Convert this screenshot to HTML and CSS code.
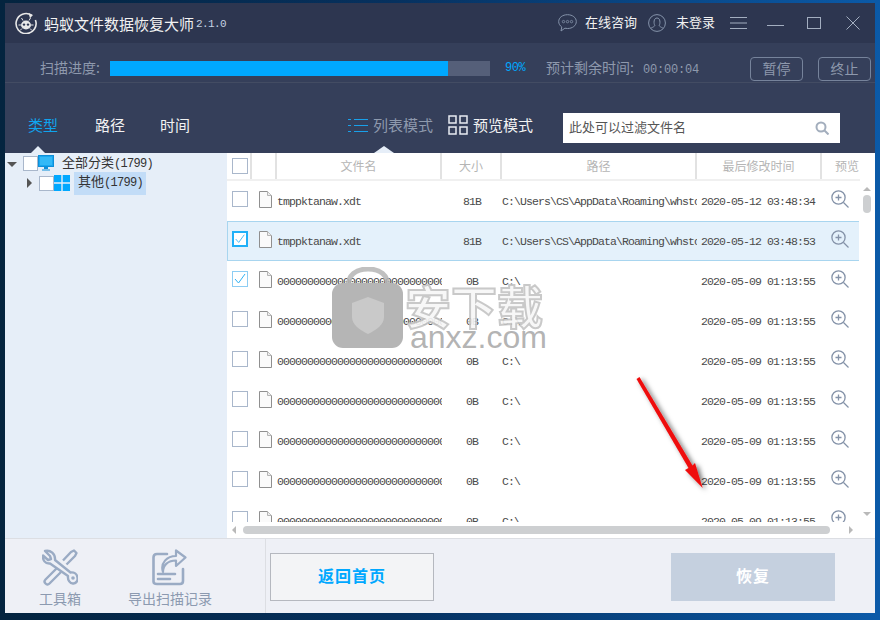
FILE: index.html
```html
<!DOCTYPE html>
<html lang="zh-CN">
<head>
    <meta charset="UTF-8">
    <title>蚂蚁文件数据恢复大师</title>
    <link rel="stylesheet" href="styles.css">
</head>
<body>
    <svg class="defs" width="0" height="0">
        <symbol id="doc" viewBox="0 0 13 17">
            <path d="M.5.5h8l4 4v12H.5z" fill="#fafafa" stroke="#8f8f8f"/>
            <path d="M8.5.5v4h4" fill="#eee" stroke="#b5b5b5"/>
        </symbol>
        <symbol id="zoom" viewBox="0 0 18 18">
            <circle cx="7.5" cy="7.5" r="6.6" fill="none" stroke="#8492a8" stroke-width="1.3"/>
            <path d="M12.5 12.5l5 5" stroke="#8492a8" stroke-width="1.3"/>
            <path d="M4.5 7.5h6M7.5 4.5v6" stroke="#8492a8" stroke-width="1.3"/>
        </symbol>
    </svg>

    <div class="window">
        <header class="titlebar">
            <svg class="logo" width="22" height="22" viewBox="0 0 22 22">
                <path d="M16.5 3.2A10 10 0 1 0 20.4 8" fill="none" stroke="#e8e8e8" stroke-width="1.6"/>
                <path d="M13.5 1l4.5 2-3 3.2z" fill="#e8e8e8"/>
                <ellipse cx="11" cy="13" rx="5" ry="4.4" fill="#e8e8e8"/>
                <circle cx="9" cy="12.6" r="1.2" fill="#2d3650"/>
                <circle cx="13" cy="12.6" r="1.2" fill="#2d3650"/>
                <path d="M8 8.5L6.5 6M14 8.5L15.5 6M6 13H3.5M16 13h2.500M7 16.500L5 18.500M15 16.500l2 2" stroke="#e8e8e8"/>
            </svg>
            <div class="app-name">蚂蚁文件数据恢复大师</div>
            <div class="version">2.1.0</div>

            <div class="title-right">
                <svg width="19" height="18" viewBox="0 0 19 18">
                    <path d="M9.500.700c5 0 8.800 2.900 8.800 6.900s-3.800 6.900-8.800 6.900c-.9 0-1.800-.1-2.600-.3L3 17l.8-4C1.900 11.700.7 9.800.700 7.600.700 3.600 4.500.700 9.500.700z" fill="none" stroke="#8593aa"/>
                    <circle cx="5.500" cy="7.600" r="1.200" fill="none" stroke="#8593aa" stroke-width=".8"/>
                    <circle cx="9.500" cy="7.600" r="1.200" fill="none" stroke="#8593aa" stroke-width=".8"/>
                    <circle cx="13.500" cy="7.600" r="1.200" fill="none" stroke="#8593aa" stroke-width=".8"/>
                </svg>
                <span class="title-link chat">在线咨询</span>
                <svg class="user-icon" width="18" height="18" viewBox="0 0 18 18">
                    <circle cx="9" cy="9" r="8.400" fill="none" stroke="#8593aa"/>
                    <path d="M6.800 11.500C5.600 9.500 5.500 4 9 4s3.400 5.500 2.200 7.500c.2 1 2 1.700 3.600 2.500M6.800 11.500c-.2 1-2 1.700-3.600 2.500" fill="none" stroke="#8593aa"/>
                </svg>
                <span class="title-link login">未登录</span>
                <svg class="ctl-menu" width="17" height="12" viewBox="0 0 17 12">
                    <path d="M0 .5h17M0 6h17M0 11.500h17" stroke="#a3aec0"/>
                </svg>
                <svg class="ctl-min" width="17" height="12" viewBox="0 0 17 12">
                    <path d="M0 8.500h17" stroke="#a3aec0"/>
                </svg>
                <svg class="ctl-max" width="14" height="12" viewBox="0 0 14 12">
                    <rect x=".5" y=".5" width="13" height="11" fill="none" stroke="#a3aec0"/>
                </svg>
                <svg class="ctl-close" width="14" height="14" viewBox="0 0 14 14">
                    <path d="M.5.5l13 13M13.500.5l-13 13" stroke="#a3aec0"/>
                </svg>
            </div>
        </header>

        <section class="progress-row">
            <span class="progress-label">扫描进度:</span>
            <div class="progress-track"><div class="progress-fill" style="width: 89%"></div></div>
            <span class="progress-pct">90%</span>
            <span class="progress-eta">预计剩余时间:<span class="eta-num">00:00:04</span></span>
            <div class="progress-btns">
                <button class="ghost-btn">暂停</button>
                <button class="ghost-btn">终止</button>
            </div>
        </section>

        <nav class="tabs-row">
            <span class="tab active">类型</span>
            <span class="tab">路径</span>
            <span class="tab">时间</span>

            <div class="mode-group">
                <span class="mode list-mode">
                    <svg width="20" height="13" viewBox="0 0 20 13">
                        <path d="M0 .5h3M6 .5h14M0 6.500h3M6 6.500h14M0 12.500h3M6 12.500h14" stroke="#19a0ea"/>
                    </svg>
                    列表模式
                </span>
                <span class="mode grid-mode">
                    <svg width="20" height="20" viewBox="0 0 20 20">
                        <path d="M1 1h7v7H1zM12 1h7v7h-7zM1 12h7v7H1zM12 12h7v7h-7z" fill="none" stroke="#e8ecf2" stroke-width="1.500"/>
                    </svg>
                    预览模式
                </span>
            </div>

            <div class="search">
                <span class="search-hint">此处可以过滤文件名</span>
                <svg width="14" height="14" viewBox="0 0 14 14">
                    <circle cx="6" cy="6" r="4.500" fill="none" stroke="#a3aebd" stroke-width="2"/>
                    <path d="M9.500 9.500l4 4" stroke="#a3aebd" stroke-width="2"/>
                </svg>
            </div>
        </nav>

        <main class="content">
            <aside class="tree">
                <div class="tree-row root">
                    <span class="arrow-open"></span>
                    <span class="check"></span>
                    <svg class="tree-icon" width="16" height="16" viewBox="0 0 16 16">
                        <rect x=".5" y=".5" width="15" height="11" fill="#1aa7f0" stroke="#0d8fd8"/>
                        <path d="M2 2h12v8H2z" fill="#33b9f7"/>
                        <path d="M6 12h4v2H6zM4 14.500h8v1H4z" fill="#0d8fd8"/>
                    </svg>
                    <span class="tree-label">全部分类<span class="count">(1799)</span></span>
                </div>
                <div class="tree-row child">
                    <span class="arrow-closed"></span>
                    <span class="check"></span>
                    <svg class="tree-icon" width="16" height="16" viewBox="0 0 16 16">
                        <path d="M0 0h7.300v7.300H0zM8.700 0H16v7.300H8.700zM0 8.700h7.300V16H0zM8.700 8.700H16V16H8.700z" fill="#00a8ff"/>
                    </svg>
                    <span class="tree-label picked">其他<span class="count">(1799)</span></span>
                </div>
            </aside>

            <section class="list">
                <div class="grid-row head">
                    <span class="cell"><span class="check"></span></span>
                    <span class="cell"></span>
                    <span class="cell">文件名</span>
                    <span class="cell">大小</span>
                    <span class="cell">路径</span>
                    <span class="cell">最后修改时间</span>
                    <span class="cell last">预览</span>
                </div>

                <div class="rows">
                    <div class="grid-row item">
                        <span class="check"></span>
                        <svg class="doc" width="13" height="17"><use href="#doc"/></svg>
                        <span class="name">tmppktanaw.xdt</span>
                        <span class="size">81B</span>
                        <span class="path">C:\Users\CS\AppData\Roaming\whstc</span>
                        <span class="time">2020-05-12 03:48:34</span>
                        <svg class="zoom" width="18" height="18"><use href="#zoom"/></svg>
                    </div>
                    <div class="grid-row item selected">
                        <span class="check on strong">
                            <svg width="14" height="14" viewBox="0 0 14 14"><path d="M2 7l3.500 4L12 2" fill="none" stroke="#2fb2f5"/></svg>
                        </span>
                        <svg class="doc" width="13" height="17"><use href="#doc"/></svg>
                        <span class="name">tmppktanaw.xdt</span>
                        <span class="size">81B</span>
                        <span class="path">C:\Users\CS\AppData\Roaming\whstc</span>
                        <span class="time">2020-05-12 03:48:53</span>
                        <svg class="zoom" width="18" height="18"><use href="#zoom"/></svg>
                    </div>
                    <div class="grid-row item">
                        <span class="check on">
                            <svg width="14" height="14" viewBox="0 0 14 14"><path d="M2 7l3.500 4L12 2" fill="none" stroke="#2fb2f5"/></svg>
                        </span>
                        <svg class="doc" width="13" height="17"><use href="#doc"/></svg>
                        <span class="name">000000000000000000000000000000000</span>
                        <span class="size">0B</span>
                        <span class="path">C:\</span>
                        <span class="time">2020-05-09 01:13:55</span>
                        <svg class="zoom" width="18" height="18"><use href="#zoom"/></svg>
                    </div>
                    <div class="grid-row item">
                        <span class="check"></span>
                        <svg class="doc" width="13" height="17"><use href="#doc"/></svg>
                        <span class="name">000000000000000000000000000000000</span>
                        <span class="size">0B</span>
                        <span class="path">C:\</span>
                        <span class="time">2020-05-09 01:13:55</span>
                        <svg class="zoom" width="18" height="18"><use href="#zoom"/></svg>
                    </div>
                    <div class="grid-row item">
                        <span class="check"></span>
                        <svg class="doc" width="13" height="17"><use href="#doc"/></svg>
                        <span class="name">000000000000000000000000000000000</span>
                        <span class="size">0B</span>
                        <span class="path">C:\</span>
                        <span class="time">2020-05-09 01:13:55</span>
                        <svg class="zoom" width="18" height="18"><use href="#zoom"/></svg>
                    </div>
                    <div class="grid-row item">
                        <span class="check"></span>
                        <svg class="doc" width="13" height="17"><use href="#doc"/></svg>
                        <span class="name">000000000000000000000000000000000</span>
                        <span class="size">0B</span>
                        <span class="path">C:\</span>
                        <span class="time">2020-05-09 01:13:55</span>
                        <svg class="zoom" width="18" height="18"><use href="#zoom"/></svg>
                    </div>
                    <div class="grid-row item">
                        <span class="check"></span>
                        <svg class="doc" width="13" height="17"><use href="#doc"/></svg>
                        <span class="name">000000000000000000000000000000000</span>
                        <span class="size">0B</span>
                        <span class="path">C:\</span>
                        <span class="time">2020-05-09 01:13:55</span>
                        <svg class="zoom" width="18" height="18"><use href="#zoom"/></svg>
                    </div>
                    <div class="grid-row item">
                        <span class="check"></span>
                        <svg class="doc" width="13" height="17"><use href="#doc"/></svg>
                        <span class="name">000000000000000000000000000000000</span>
                        <span class="size">0B</span>
                        <span class="path">C:\</span>
                        <span class="time">2020-05-09 01:13:55</span>
                        <svg class="zoom" width="18" height="18"><use href="#zoom"/></svg>
                    </div>
                    <div class="grid-row item">
                        <span class="check"></span>
                        <svg class="doc" width="13" height="17"><use href="#doc"/></svg>
                        <span class="name">000000000000000000000000000000000</span>
                        <span class="size">0B</span>
                        <span class="path">C:\</span>
                        <span class="time">2020-05-09 01:13:55</span>
                        <svg class="zoom" width="18" height="18"><use href="#zoom"/></svg>
                    </div>
                </div>

                <div class="hscroll">
                    <span class="sb-left"></span>
                    <span class="hthumb"></span>
                    <span class="sb-right"></span>
                </div>

                <div class="vscroll">
                    <span class="sb-up"></span>
                    <span class="vthumb"></span>
                    <span class="sb-down"></span>
                </div>
            </section>
        </main>

        <footer class="bottom">
            <div class="tools">
                <div class="tool">
                    <svg width="36" height="37" viewBox="0 0 36 37">
                        <g fill="none" stroke="#9aabc4" stroke-width="2.400" stroke-linejoin="round">
                            <path d="M3 2l5 5 1 3-3 1-5-4.500C.500 11 3 15 8 14.500L26 27c-.5 4 2 8 5.500 7.500 3-.3 4.500-3 4-6-.5-3.500-3.500-5.500-7-5L13 11C13.500 5 8.500.500 3 2z"/>
                            <path d="M21 11.500L29 3l3-1.500 2.500 2.500L33 7l-8.500 8.500"/>
                            <path d="M15 19L3.500 30.500c-1.500 1.500-1 3 0 4s2.500 1.500 4 0L19 23"/>
                        </g>
                        <circle cx="31" cy="29" r="1.800" fill="#9aabc4"/>
                    </svg>
                    <span class="tool-label">工具箱</span>
                </div>
                <div class="tool">
                    <svg width="36" height="37" viewBox="0 0 36 37">
                        <g fill="none" stroke="#9aabc4" stroke-width="2.600" stroke-linejoin="round" stroke-linecap="round">
                            <path d="M15 5H5C2.500 5 1.500 6 1.500 8.500v24C1.500 34.500 2.500 35 5 35h23c2 0 3-.5 3-3V20"/>
                            <path d="M11 23c0-7 5-11.500 13-11.500V17l9.500-8.500L24 1.500V7C15 7 8 14 11 23z" stroke-width="2.200"/>
                            <path d="M6 25h17M6 30h12"/>
                        </g>
                    </svg>
                    <span class="tool-label">导出扫描记录</span>
                </div>
            </div>
            <button class="btn-home">返回首页</button>
            <button class="btn-restore">恢复</button>
        </footer>
    </div>

    <div class="watermark">
        <svg width="72" height="82" viewBox="0 0 72 82">
            <path d="M16 20C16 8 24 2 36 2s20 6 20 18" fill="none" stroke="#b5b5b5" stroke-width="5" opacity=".85"/>
            <rect x="0" y="16" width="71" height="65" rx="11" fill="#b5b5b5"/>
            <path d="M20 36l16-6 16 6v14c0 8-8 13-16 17-8-4-16-9-16-17z" fill="#c9c9c9"/>
        </svg>
        <div class="wm-text">
            <div class="wm-cn">安下载</div>
            <div class="wm-en">anxz.com</div>
        </div>
    </div>

    <svg class="red-arrow" width="90" height="130" viewBox="0 0 90 130">
        <defs>
            <filter id="arrow-shadow" x="-30%" y="-30%" width="160%" height="160%">
                <feDropShadow dx="3" dy="2" stdDeviation="2.500" flood-color="#000" flood-opacity=".55"/>
            </filter>
        </defs>
        <path d="M3.500 6L6.500 4 59.500 92.500 62 90 69.700 115 52 97 55.500 95z" fill="#ee0d0d" filter="url(#arrow-shadow)"/>
    </svg>
</body>
</html>
```

FILE: styles.css
```css
* {
    box-sizing: border-box;
}

html, body {
    height: 100%;
}

body {
    margin: 0;
    padding: 3px 5px 7px;
    position: relative;
    overflow: hidden;
    font-family: "Noto Sans CJK SC", "Liberation Sans", sans-serif;
    background: linear-gradient(90deg, #04243f 0%, #06315f 45%, #0b5aa8 100%);
}

.defs {
    position: absolute;
}

button {
    font-family: inherit;
    cursor: pointer;
}

.window {
    width: 870px;
    height: 610px;
    display: flex;
    flex-direction: column;
    background: #353f5a;
}

/* title bar */
.titlebar {
    height: 40px;
    flex-shrink: 0;
    display: flex;
    align-items: center;
    padding: 0 15px 0 10px;
    background: #2d3650;
    color: #fff;
}

.app-name {
    margin-left: 7px;
    font-size: 15px;
    color: #f2f2f2;
}

.version {
    margin: 2px 0 0 2px;
    font-family: "Liberation Mono", monospace;
    font-size: 11px;
    letter-spacing: -.6px;
    color: #c5d2e2;
}

.title-right {
    margin-left: auto;
    display: flex;
    align-items: center;
}

.title-link {
    margin-bottom: 3px;
    font-size: 13px;
    color: #f2f2f2;
}

.chat {
    margin-left: 8px;
}

.user-icon {
    margin-left: 11px;
}

.login {
    margin-left: 10px;
}

.ctl-menu {
    margin-left: 15px;
}

.ctl-min {
    margin-left: 20px;
}

.ctl-max {
    margin-left: 23px;
}

.ctl-close {
    margin-left: 25px;
}

/* progress */
.progress-row {
    height: 40px;
    flex-shrink: 0;
    display: flex;
    align-items: center;
    padding: 12px 4px 0 35px;
    border-bottom: 1px solid #434c63;
    color: #8e99ad;
    font-size: 14px;
}

.progress-label {
    width: 70px;
    margin-bottom: 4px;
    white-space: nowrap;
}

.progress-track {
    width: 380px;
    height: 15px;
    background: #555f79;
}

.progress-fill {
    height: 100%;
    background: #00a8ff;
}

.progress-pct {
    width: 41px;
    margin: 0 0 2px 15px;
    font-family: "Liberation Mono", monospace;
    font-size: 12px;
    letter-spacing: -.5px;
    color: #00a8ff;
}

.progress-eta {
    margin-bottom: 4px;
    white-space: nowrap;
}

.eta-num {
    font-family: "Liberation Mono", monospace;
    font-size: 12px;
    letter-spacing: -.2px;
    margin-left: 9px;
}

.progress-btns {
    margin-left: auto;
    display: flex;
    gap: 15px;
}

.ghost-btn {
    width: 53px;
    height: 24px;
    padding: 0 0 2px;
    font-size: 14px;
    line-height: 20px;
    color: #8e99ad;
    background: transparent;
    border: 1px solid #76839b;
    border-radius: 4px;
}

/* tabs */
.tabs-row {
    height: 70px;
    flex-shrink: 0;
    display: flex;
    align-items: flex-start;
    padding: 30px 35px 0 23px;
}

.tab {
    position: relative;
    width: 30px;
    margin-right: 35px;
    font-size: 15px;
    line-height: 24px;
    color: #f2f2f2;
}

.tab.active {
    margin-right: 37px;
    color: #0fa4ee;
}

.tab.active::after {
    content: "";
    position: absolute;
    left: 3px;
    top: 33px;
    border: 7px solid transparent;
    border-top: 0;
    border-bottom-color: #e6eef8;
}

.mode-group {
    margin-left: auto;
    display: flex;
    gap: 15px;
    margin-right: 30px;
}

.mode {
    position: relative;
    display: flex;
    align-items: center;
    gap: 5px;
    font-size: 15px;
    line-height: 24px;
}

.list-mode {
    color: #8e99ad;
}

.list-mode::after {
    content: "";
    position: absolute;
    left: 26px;
    top: 33px;
    border: 10px solid transparent;
    border-top: 0;
    border-bottom-width: 7px;
    border-bottom-color: #e6eef8;
}

.grid-mode {
    color: #f2f2f2;
}

.search {
    width: 277px;
    height: 30px;
    display: flex;
    align-items: center;
    justify-content: space-between;
    padding: 0 11px 0 6px;
    background: #fff;
}

.search-hint {
    margin-bottom: 4px;
    font-size: 13px;
    color: #555;
}

/* main area */
.content {
    height: 385px;
    flex-shrink: 0;
    display: flex;
    background: #fff;
}

.tree {
    width: 222px;
    flex-shrink: 0;
    background: #e6eef8;
    font-size: 13px;
    color: #333;
}

.tree-row {
    height: 20px;
    display: flex;
    align-items: center;
}

.tree-row.root {
    padding-left: 2px;
}

.tree-row.child {
    padding-left: 22px;
}

.arrow-open {
    width: 0;
    height: 0;
    margin: 2px 6px 0 0;
    border: 5px solid transparent;
    border-top: 5px solid #555;
    border-bottom: 0;
}

.arrow-closed {
    width: 0;
    height: 0;
    margin-right: 7px;
    border: 5px solid transparent;
    border-left: 5px solid #555;
    border-right: 0;
}

.check {
    display: inline-flex;
    align-items: center;
    justify-content: center;
    width: 16px;
    height: 16px;
    flex-shrink: 0;
    background: #fff;
    border: 1px solid #a9b7cb;
}

.check.on {
    border-color: #8dcdf3;
}

.check.strong {
    border: 2px solid #1fb0f8;
}

.tree .check {
    width: 15px;
    height: 15px;
}

.tree-icon {
    flex-shrink: 0;
}

.tree-label {
    margin: 0 0 3px 8px;
    white-space: nowrap;
}

.tree-label.picked {
    margin: 0 0 0 4px;
    padding: 0 0 3px 4px;
    width: 72px;
    line-height: 17px;
    background: #c2dcf7;
}

.count {
    font-family: "Liberation Mono", monospace;
    font-size: 12px;
    letter-spacing: -.7px;
}

.list {
    position: relative;
    flex: 1;
    min-width: 0;
    overflow: hidden;
}

.grid-row {
    display: grid;
    grid-template-columns: 25px 25px 165px 60px 195px 125px 38px;
    width: 633px;
}

.head {
    height: 28px;
    padding-bottom: 0;
    border-bottom: 2px solid #f0f0f0;
    font-size: 12px;
    color: #b5b5b5;
}

.cell {
    display: flex;
    align-items: center;
    justify-content: center;
    padding-bottom: 2px;
    border-right: 2px solid #e2e2e2;
}

.cell.last {
    border-right: 0;
    justify-content: flex-start;
    padding-left: 13px;
    white-space: nowrap;
    overflow: hidden;
}

.cell:first-child {
    justify-content: flex-start;
    padding: 0 0 0 5px;
}

.rows {
    height: 341px;
    overflow: hidden;
}

.item {
    height: 40px;
    align-items: center;
    font-family: "Liberation Mono", monospace;
    font-size: 11.5px;
    letter-spacing: -.9px;
    color: #4a4a4a;
}

.item.selected {
    background: #e4f1fb;
    box-shadow: inset 0 0 0 1px #a8d5ef;
}

.item .check {
    margin: 0 0 4px 5px;
}

.doc {
    margin: 0 0 4px 7px;
}

.name, .path {
    overflow: hidden;
    white-space: nowrap;
}

.size {
    text-align: center;
}

.time {
    padding-left: 4px;
    white-space: nowrap;
}

.zoom {
    margin: 0 0 4px 9px;
}

.hscroll {
    position: absolute;
    left: 0;
    top: 369px;
    width: 633px;
    height: 16px;
    display: flex;
    align-items: center;
    background: #fff;
}

.sb-left {
    margin-left: 5px;
    border: 4px solid transparent;
    border-right: 4px solid #b9b9b9;
    border-left: 0;
}

.hthumb {
    width: 587px;
    height: 8px;
    margin-left: 7px;
    border-radius: 4px;
    background: #cdcfd1;
}

.sb-right {
    margin-left: 19px;
    border: 4px solid transparent;
    border-left: 4px solid #b9b9b9;
    border-right: 0;
}

.vscroll {
    position: absolute;
    right: 0;
    top: 28px;
    width: 16px;
    height: 341px;
    display: flex;
    flex-direction: column;
    align-items: center;
    background: #fff;
}

.sb-up {
    margin-top: 6px;
    border: 4px solid transparent;
    border-bottom: 4px solid #b9b9b9;
    border-top: 0;
}

.vthumb {
    width: 8px;
    height: 18px;
    margin-top: 4px;
    border-radius: 4px;
    background: #cdcfd1;
}

.sb-down {
    margin-top: auto;
    margin-bottom: 6px;
    border: 4px solid transparent;
    border-top: 4px solid #b9b9b9;
    border-bottom: 0;
}

/* bottom */
.bottom {
    flex: 1;
    display: flex;
    align-items: flex-start;
    background: #eef0f6;
    border-top: 1px solid #dcdee3;
}

.tools {
    width: 261px;
    height: 74px;
    display: flex;
    padding-right: 40px;
    border-right: 1px solid #dcdee3;
}

.tool {
    width: 110px;
    display: flex;
    flex-direction: column;
    align-items: center;
    padding-top: 10px;
}

.tool-label {
    margin-top: 2px;
    font-size: 14px;
    line-height: 20px;
    color: #8c9ab0;
    white-space: nowrap;
}

.btn-home {
    width: 164px;
    height: 48px;
    margin: 14px 0 0 4px;
    padding: 0 0 4px;
    font-size: 16px;
    font-weight: bold;
    letter-spacing: 1px;
    color: #00a8ff;
    background: #f3f4f6;
    border: 1px solid #b5b8bf;
}

.btn-restore {
    width: 164px;
    height: 48px;
    margin: 14px 40px 0 auto;
    padding: 0 0 4px;
    font-size: 16px;
    font-weight: bold;
    letter-spacing: 1px;
    color: #fff;
    background: #c5d0df;
    border: 0;
}

/* overlays */
.watermark {
    position: absolute;
    left: 332px;
    top: 267px;
    display: flex;
    gap: 1px;
    pointer-events: none;
}

.wm-text {
    padding-top: 14px;
    line-height: 1;
}

.wm-cn {
    font-size: 46px;
    line-height: 46px;
    font-weight: bold;
    color: #f7f7f7;
    -webkit-text-stroke: 2px #c4c4c4;
    opacity: .9;
    white-space: nowrap;
}

.wm-en {
    margin: -6px 0 0 5px;
    font-family: "Liberation Sans", sans-serif;
    font-size: 32px;
    line-height: 32px;
    color: rgba(160, 160, 160, .8);
    white-space: nowrap;
}

.red-arrow {
    position: absolute;
    left: 633px;
    top: 373px;
    pointer-events: none;
}
```
